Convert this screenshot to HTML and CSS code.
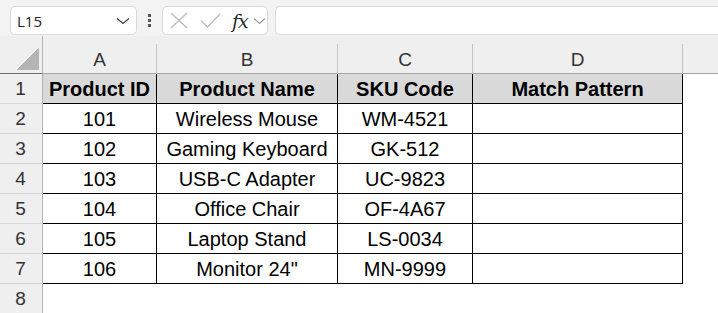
FILE: index.html
```html
<!DOCTYPE html>
<html lang="en">
<head>
    <meta charset="UTF-8">
    <title>Sheet</title>
    <link rel="stylesheet" href="styles.css">
</head>
<body>
    <div class="formula-bar">
        <div class="name-box">
            <span>L15</span>
            <svg width="14" height="8" viewBox="0 0 14 8"><path d="M1 1.5 L7 6.5 L13 1.5" fill="none" stroke="#444" stroke-width="1.3"/></svg>
        </div>
        <div class="dots"><i></i><i></i><i></i></div>
        <div class="fx-box">
            <svg width="18" height="17" viewBox="0 0 18 17"><path d="M1 1 L17 16 M17 1 L1 16" fill="none" stroke="#bdbdbd" stroke-width="1.4"/></svg>
            <svg width="21" height="15" viewBox="0 0 21 15"><path d="M1 7.5 L7.5 14 L20 1" fill="none" stroke="#bdbdbd" stroke-width="1.4"/></svg>
            <span class="fx">fx</span>
            <svg width="13" height="8" viewBox="0 0 13 8"><path d="M1 1.5 L6.5 6.5 L12 1.5" fill="none" stroke="#999" stroke-width="1.2"/></svg>
        </div>
        <div class="formula-input"></div>
    </div>

    <div class="sheet">
        <div class="corner"><div class="tri"></div></div>
        <div class="col-head">A</div>
        <div class="col-head">B</div>
        <div class="col-head">C</div>
        <div class="col-head">D</div>
        <div class="col-head last"></div>

        <div class="row-head">1</div>
        <div class="cell th">Product ID</div>
        <div class="cell th">Product Name</div>
        <div class="cell th">SKU Code</div>
        <div class="cell th">Match Pattern</div>
        <div class="blank"></div>

        <div class="row-head">2</div>
        <div class="cell">101</div>
        <div class="cell">Wireless Mouse</div>
        <div class="cell">WM-4521</div>
        <div class="cell"></div>
        <div class="blank"></div>

        <div class="row-head">3</div>
        <div class="cell">102</div>
        <div class="cell">Gaming Keyboard</div>
        <div class="cell">GK-512</div>
        <div class="cell"></div>
        <div class="blank"></div>

        <div class="row-head">4</div>
        <div class="cell">103</div>
        <div class="cell">USB-C Adapter</div>
        <div class="cell">UC-9823</div>
        <div class="cell"></div>
        <div class="blank"></div>

        <div class="row-head">5</div>
        <div class="cell">104</div>
        <div class="cell">Office Chair</div>
        <div class="cell">OF-4A67</div>
        <div class="cell"></div>
        <div class="blank"></div>

        <div class="row-head">6</div>
        <div class="cell">105</div>
        <div class="cell">Laptop Stand</div>
        <div class="cell">LS-0034</div>
        <div class="cell"></div>
        <div class="blank"></div>

        <div class="row-head">7</div>
        <div class="cell">106</div>
        <div class="cell">Monitor 24"</div>
        <div class="cell">MN-9999</div>
        <div class="cell"></div>
        <div class="blank"></div>

        <div class="row-head">8</div>
        <div class="blank"></div>
        <div class="blank"></div>
        <div class="blank"></div>
        <div class="blank"></div>
        <div class="blank"></div>
    </div>
</body>
</html>
```

FILE: styles.css
```css
* {
    margin: 0;
    padding: 0;
    box-sizing: border-box;
}

body {
    font-family: 'Liberation Sans', Arial, sans-serif;
    background: #f3f3f3;
    color: #000;
    overflow: hidden;
}

/* formula bar */
.formula-bar {
    display: flex;
    align-items: center;
    height: 36px;
    padding: 6px 0 1px 10px;
}

.name-box {
    display: flex;
    align-items: center;
    justify-content: space-between;
    width: 127px;
    height: 29px;
    padding: 0 6px 0 6px;
    background: #fff;
    border: 1px solid #dadada;
    border-radius: 5px;
    font-family: 'Open Sans', sans-serif;
    font-size: 15px;
    color: #222;
}

.dots {
    display: flex;
    flex-direction: column;
    gap: 2px;
    margin: 0 11px 0 11px;
}

.dots i {
    display: block;
    width: 3px;
    height: 3px;
    background: #555;
}

.fx-box {
    display: flex;
    align-items: center;
    width: 106px;
    height: 29px;
    padding: 0 0 0 7px;
    background: #fff;
    border: 1px solid #dadada;
    border-radius: 5px;
    gap: 10px;
}

.fx-box svg:nth-child(2) {
    margin-left: 2px;
}

.fx {
    font-family: 'DejaVu Serif', 'Liberation Serif', serif;
    font-style: italic;
    font-size: 19px;
    color: #2a2a2a;
    letter-spacing: -1px;
    margin-left: 1px;
    margin-right: -5px;
}

.formula-input {
    flex: 1;
    height: 29px;
    margin-left: 7px;
    background: #fff;
    border: 1px solid #dadada;
    border-right: none;
    border-radius: 5px 0 0 5px;
}

/* sheet grid */
.sheet {
    display: grid;
    grid-template-columns: 43px 114px 181px 135px 210px 1fr;
    grid-template-rows: 38px repeat(8, 30px);
    background: #fff;
}

.corner {
    background: #efefef;
    border-right: 1px solid #b4b4b4;
    border-bottom: 1px solid #6e6e6e;
    padding: 12px 0 0 17px;
}

.tri {
    width: 22px;
    height: 22px;
    background: linear-gradient(to bottom right, transparent 50%, #b5b5b5 50%);
}

.col-head {
    background: linear-gradient(#c4c4c4, #c4c4c4) right bottom / 1px 29px no-repeat, #efefef;
    border-bottom: 1px solid #a6a6a6;
    font-size: 19px;
    color: #333;
    text-align: center;
    padding-top: 13px;
    padding-right: 1px;
}

.col-head.last {
    background: #efefef;
}

.row-head {
    background: #efefef;
    border-right: 1px solid #b4b4b4;
    border-bottom: 1px solid #d6d6d6;
    font-size: 19px;
    color: #333;
    text-align: center;
    line-height: 30px;
    padding-right: 1px;
}

.cell {
    border-right: 1px solid #000;
    border-bottom: 1px solid #000;
    font-size: 20px;
    text-align: center;
    line-height: 29px;
    padding-top: 1px;
    white-space: nowrap;
}

.cell.th {
    background: #d9d9d9;
    font-weight: bold;
}

.blank {
    background: #fff;
}
```
